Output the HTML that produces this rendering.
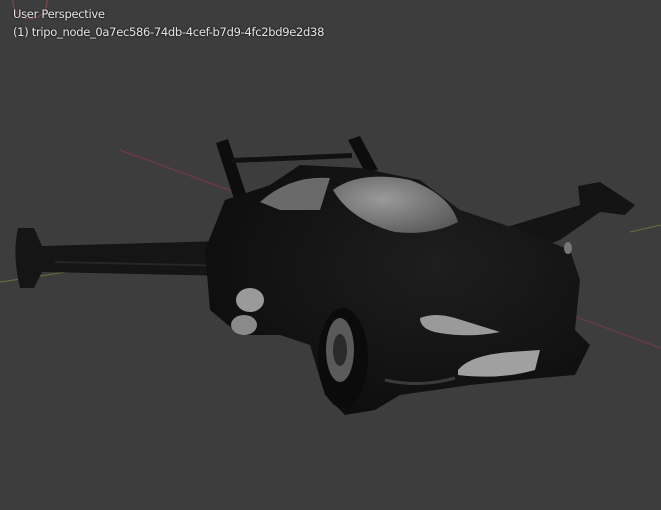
<!DOCTYPE html>
<html><head><style>
html,body{margin:0;padding:0;width:661px;height:510px;overflow:hidden;background:#3d3d3d}
.t{position:absolute;left:13px;color:#e6e6e6;font:11.5px "DejaVu Sans",sans-serif;letter-spacing:-0.3px;text-shadow:0 0 2px #000}
</style></head><body>
<svg width="661" height="510" style="position:absolute;left:0;top:0">
<defs>
<radialGradient id="b" cx="0.6" cy="0.4" r="0.7"><stop offset="0" stop-color="#1e1e1e"/><stop offset="1" stop-color="#0c0c0c"/></radialGradient>
<radialGradient id="g" cx="0.4" cy="0.4" r="0.7"><stop offset="0" stop-color="#9a9a9a"/><stop offset="1" stop-color="#5a5a5a"/></radialGradient>
</defs>
<circle cx="30" cy="2" r="17" fill="none" stroke="#8a4848" stroke-width="1"/>
<line x1="120" y1="150" x2="661" y2="348" stroke="#7a3a45" stroke-width="1"/>
<path d="M0 282 Q50 275 95 267" stroke="#6b7040" fill="none"/>
<path d="M630 232 L661 225" stroke="#6b7040"/>
<!-- struts -->
<path d="M216 143 L228 139 L248 200 L236 205 Z" fill="#0d0d0d"/>
<path d="M348 140 L360 136 L378 170 L365 172 Z" fill="#0d0d0d"/>
<path d="M232 158 L352 153 L352 158 L232 163 Z" fill="#111"/>
<!-- right wing -->
<path d="M430 250 L580 205 L578 186 L600 182 L635 205 L625 215 L600 212 L560 240 L460 278 Z" fill="#141414"/>
<!-- left wing -->
<path d="M18 228 Q12 255 20 288 L34 288 L42 272 L330 278 L330 238 L42 246 L34 228 Z" fill="#151515"/>
<path d="M55 262 L330 268" stroke="#262626" stroke-width="2"/>
<!-- body -->
<path d="M205 250 L225 200 L270 185 L300 165 L360 168 L420 180 L460 210 L520 230 L570 250 L580 280 L575 330 L590 345 L575 375 L540 378 L470 385 L400 395 L375 410 L345 415 L325 395 L310 345 L280 335 L240 335 L210 310 Z" fill="url(#b)"/>
<path d="M260 202 Q290 175 330 178 L320 210 L280 210 Z" fill="#6a6a6a"/>
<path d="M333 190 Q360 170 410 180 Q450 195 458 222 Q430 236 395 232 Q350 220 333 190 Z" fill="url(#g)"/>
<ellipse cx="343" cy="358" rx="25" ry="50" fill="#0b0b0b"/>
<ellipse cx="340" cy="350" rx="14" ry="32" fill="#5a5a5a"/>
<ellipse cx="340" cy="350" rx="7" ry="16" fill="#2a2a2a"/>
<path d="M420 318 Q435 312 455 318 L500 332 Q470 338 440 333 Q420 330 420 318 Z" fill="#9a9a9a"/>
<path d="M458 370 Q470 355 510 352 L540 350 L535 370 Q500 380 458 375 Z" fill="#a0a0a0"/>
<path d="M385 380 Q420 388 455 378" stroke="#3a3a3a" stroke-width="3" fill="none"/>
<ellipse cx="568" cy="248" rx="4" ry="6" fill="#777"/>
<ellipse cx="250" cy="300" rx="14" ry="12" fill="#9a9a9a"/>
<ellipse cx="244" cy="325" rx="13" ry="10" fill="#8a8a8a"/>
</svg>
<div class="t" style="top:7px">User Perspective</div>
<div class="t" style="top:25px">(1) tripo_node_0a7ec586-74db-4cef-b7d9-4fc2bd9e2d38</div>
</body></html>
